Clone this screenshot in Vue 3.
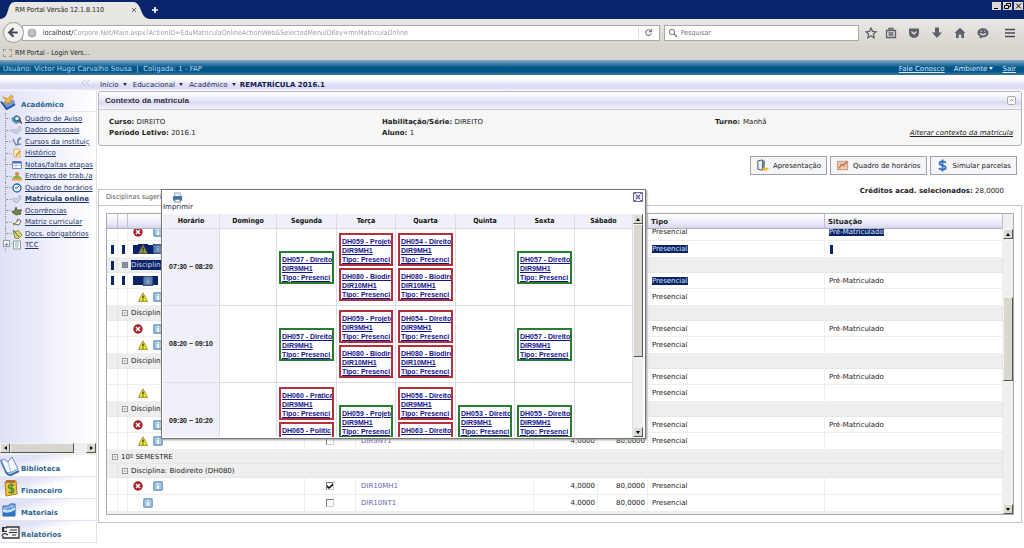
<script setup>
const toolIcons = [
  { name: 'Favoritos', line: 'M6 1l1.500 3.300 3.500.4-2.600 2.400.7 3.600L6 8.900 2.900 10.700l.7-3.600L1 4.700l3.500-.4z' },
  { name: 'Lista', line: 'M1.500 3.500h9v7h-9zM4 3.500v-2h4v2M3.500 6h5M3.500 8h5' },
  { name: 'Pocket', d: 'M1 1.500h10v4q0 5-5 5.500-5-.5-5-5.500z', over: 'M3.500 4.500L6 7l2.500-2.500' },
  { name: 'Downloads', d: 'M4 .5h4v5h3L6 11 1 5.500h3z' },
  { name: 'Início', d: 'M6 .7L11.500 6H10v5H7.300V7.500H4.700V11H2V6H.5z' },
  { name: 'Conversa', d: 'M6 1.200C9 1.200 11.500 3 11.500 5.800S9 10.300 6 10.300L2.500 11.500 2.800 9.400C1.300 8.600.5 7.400.5 5.800.5 3 3 1.200 6 1.200z', over: 'M3 6.300q3 3 6 0M3.700 4.200h1M7.300 4.200h1' },
]

const menu = [
  { t: 'Quadro de Aviso', k: 'board' },
  { t: 'Dados pessoais', k: 'tag' },
  { t: 'Cursos da instituiç', k: 'pen' },
  { t: 'Histórico', k: 'doc' },
  { t: 'Notas/faltas etapas', k: 'table' },
  { t: 'Entregas de trab./a', k: 'person' },
  { t: 'Quadro de horários', k: 'clock' },
  { t: 'Matrícula online', k: 'tag', bold: true },
  { t: 'Ocorrências', k: 'hand' },
  { t: 'Matriz curricular', k: 'link' },
  { t: 'Docs. obrigatórios', k: 'leaf' },
  { t: 'TCC', k: 'page', plus: true },
]

const sections = [
  { t: 'Biblioteca', k: 'book' },
  { t: 'Financeiro', k: 'money' },
  { t: 'Materiais', k: 'folder' },
  { t: 'Relatórios', k: 'report' },
]

const P = 'Presencial'
const M = 'Pré-Matriculado'
const rows = [
  { h: 'tall', ic: ['x', 'gap', 'info'], tipo: P, sit: M, selSit: true },
  { h: 'tall', ic: ['half', 'warn', 'half', 'info'], tipo: P, selTipo: true, selIcons: true, bar: true },
  { g: 2, t: 'Disciplina', sel: true },
  { h: 'short', ic: ['gap', 'info', 'half'], tipo: P, sit: M, selTipo: true, selIcons: true },
  { h: 'tall', ic: ['half', 'warn', 'half', 'info'], tipo: P },
  { g: 2, t: 'Disciplina' },
  { h: 'short', ic: ['x', 'gap', 'info'], tipo: P, sit: M },
  { h: 'tall', ic: ['half', 'warn', 'half', 'info'], tipo: P },
  { g: 2, t: 'Disciplina' },
  { h: 'short', ic: [], tipo: P, sit: M },
  { h: 'tall', ic: ['half', 'warn'], tipo: P },
  { g: 2, t: 'Disciplina' },
  { h: 'short', ic: ['x', 'gap', 'info'], tipo: P, sit: M },
  { h: 'tall', ic: ['half', 'warn', 'half', 'info'], turma: 'DIR9NT1', tipo: P },
  { g: 1, t: '10º SEMESTRE' },
  { g: 2, t: 'Disciplina: Biodireito (DH080)', low: true },
  { h: 'tall', ic: ['x', 'gap', 'info'], turma: 'DIR10MH1', on: true, tipo: P },
  { h: 'tall', ic: ['gap', 'info'], turma: 'DIR10NT1', tipo: P },
]

const days = ['Horário', 'Domingo', 'Segunda', 'Terça', 'Quarta', 'Quinta', 'Sexta', 'Sábado']
const c = (code, cls, color) => ({ code, cls, color })
const a = c('DH059 - Projeto', 'DIR9MH1', 'red')
const b = c('DH080 - Biodire', 'DIR10MH1', 'red')
const e = c('DH054 - Direito', 'DIR9MH1', 'red')
const f = c('DH057 - Direito', 'DIR9MH1', 'green')
const slots = [
  { time: '07:30 ~ 08:20', d: [[], [f], [a, b], [e, b], [], [f], []] },
  { time: '08:20 ~ 09:10', d: [[], [f], [a, b], [e, b], [], [f], []] },
  {
    time: '09:30 ~ 10:20',
    d: [
      [],
      [c('DH060 - Prática', 'DIR9MH1', 'red'), c('DH065 - Polític', 'DIR9MH1', 'red')],
      [c('DH059 - Projeto', 'DIR9MH1', 'green')],
      [c('DH056 - Direito', 'DIR9MH1', 'red'), c('DH063 - Direito', 'DIR9MH1', 'red')],
      [c('DH053 - Direito', 'DIR9MH1', 'green')],
      [c('DH055 - Direito', 'DIR9MH1', 'green')],
      [],
    ],
  },
]
</script>

<template>
  <div class="page">
    <div class="titlebar">
      <div class="tab">
        <svg class="tabshape" viewBox="0 0 154 18" preserveAspectRatio="none"><path d="M0 18Q6 18 8 10Q10 1 15 1H137Q142 1 145 10Q148 18 154 18z" fill="#e9e7e3" /></svg>
        <span class="tabtext">RM Portal Versão 12.1.8.110</span>
        <button class="tabclose" aria-label="Fechar aba"><svg viewBox="0 0 6 6"><path d="M1 1l4 4M5 1L1 5" stroke="#666" /></svg></button>
      </div>
      <button class="newtab" aria-label="Nova aba"><svg viewBox="0 0 8 8"><path d="M4 1v6M1 4h6" stroke="#fff" stroke-width="1.600" /></svg></button>
      <div class="wins">
        <button aria-label="Minimizar"><svg viewBox="0 0 9 8"><path d="M2 6.500h4" stroke="#000" /></svg></button>
        <button aria-label="Restaurar"><svg viewBox="0 0 9 8"><path d="M3.500 3V1.500h4v3H6M1.500 3.500h4v3h-4z" stroke="#000" fill="none" /></svg></button>
        <button aria-label="Fechar"><svg viewBox="0 0 9 8"><path d="M2 1.500l5 5M7 1.500l-5 5" stroke="#000" /></svg></button>
      </div>
    </div>

    <div class="navbar">
      <button class="back" aria-label="Voltar"><svg viewBox="0 0 20 20"><path d="M15 10H6M10 5L5 10l5 5" fill="none" stroke="#444b55" stroke-width="2.500" /></svg></button>
      <div class="field url">
        <svg class="globe" viewBox="0 0 10 10"><circle cx="5" cy="5" r="4" fill="#ddd" stroke="#aaa" /><path d="M1 4h8M1.500 7h7M5 1v8M3 1.500q-1 3.500 0 7M7 1.500q1 3.500 0 7" stroke="#999" stroke-width=".6" fill="none" /></svg>
        <input aria-label="Endereço" value="localhost/Corpore.Net/Main.aspx?ActionID=EduMatriculaOnlineActionWeb&SelectedMenuIDKey=mnMatriculaOnline" />
        <button class="reload" aria-label="Recarregar"><svg viewBox="0 0 10 10"><path d="M7.500 3A3.200 3.200 0 1 0 8.200 6M8.500 1v3H5.500" fill="none" stroke="#777" stroke-width="1.200" /></svg></button>
      </div>
      <div class="field search">
        <svg class="lens" viewBox="0 0 10 10"><circle cx="4" cy="4" r="2.700" fill="none" stroke="#777" /><path d="M6 6l3 3" stroke="#777" stroke-width="1.300" /></svg>
        <input aria-label="Pesquisar" placeholder="Pesquisar" />
      </div>
      <div class="tools">
        <button v-for="i in toolIcons" :key="i.name" :aria-label="i.name">
          <svg viewBox="0 0 12 12">
            <path v-if="i.d" :d="i.d" fill="#5c626b" />
            <path v-if="i.line" :d="i.line" fill="none" stroke="#5c626b" stroke-width="1.300" />
            <path v-if="i.over" :d="i.over" fill="none" stroke="#e4e2de" stroke-width="1.300" />
          </svg>
        </button>
      </div>
      <button class="burger" aria-label="Menu"><svg viewBox="0 0 12 12"><path d="M1 2.500h10M1 6h10M1 9.500h10" stroke="#444b55" stroke-width="1.600" /></svg></button>
    </div>
    <div class="bookmarks"><i></i><a href="#">RM Portal - Login Vers...</a></div>

    <header class="user">
      <span>Usuário: Victor Hugo Carvalho Sousa &nbsp;|&nbsp; Coligada: 1 - FAP</span>
      <nav><a href="#">Fale Conosco</a><button>Ambiente <i class="caret"></i></button><a href="#">Sair</a></nav>
    </header>

    <div class="crumbs">
      <span class="chev"><svg viewBox="0 0 10 8"><path d="M4 1L1 4l3 3M8 1L5 4l3 3" fill="none" stroke="#c4c4dc" /></svg></span>
      <nav><a href="#">Início <i class="caret"></i></a><a href="#">Educacional <i class="caret"></i></a><a href="#">Acadêmico <i class="caret"></i></a><b>REMATRÍCULA 2016.1</b></nav>
    </div>

    <div class="body">
      <aside>
        <h2>
          <svg viewBox="0 0 18 18"><path d="M2 10l4-3 9-1 1 5-9 6z" fill="#6d9be0" /><path d="M1 8l6 8 9-5" fill="none" stroke="#2456a4" stroke-width="2" /><path d="M3 3l5 2 4-4 2 2-3 4 2 3-4-1-4 2 1-4z" fill="#f3b63e" stroke="#b57a1a" stroke-width=".6" /></svg>
          Acadêmico
        </h2>
        <ul class="tree">
          <li v-for="m in menu" :key="m.t">
            <span class="twig"><i v-if="m.plus">+</i></span>
            <svg viewBox="0 0 10 10">
              <g v-if="m.k === 'board'"><path d="M0 4l4-3 5 3v4l-5 2-4-3z" fill="#4c94bd" /><circle cx="5" cy="4.500" r="2.400" fill="#d9eff9" stroke="#27506e" /><path d="M7 6l3 3.500" stroke="#7a3b1c" stroke-width="1.600" /></g>
              <g v-else-if="m.k === 'tag'"><path d="M1 4l4 1 3-4 1 4-4 4-4-2z" fill="#c9d4e6" stroke="#9aaac4" stroke-width=".6" /></g>
              <g v-else-if="m.k === 'pen'"><path d="M1 2l3 6 5-1" fill="none" stroke="#7a88a4" stroke-width="1.500" /><path d="M9 1Q5 2 6 7" fill="none" stroke="#4b6fb0" stroke-width="1.300" /></g>
              <g v-else-if="m.k === 'doc'"><path d="M2 1h5l1 2v6H2z" fill="#fff3c9" stroke="#c9a050" stroke-width=".8" /><path d="M8 3L4 8" stroke="#e08a20" stroke-width="1.400" /></g>
              <g v-else-if="m.k === 'table'"><path d="M.5 1.500h9v7h-9z" fill="#fff" stroke="#6c8fce" /><path d="M1 2.500h8" stroke="#3f6cc0" stroke-width="2" /><path d="M1 5.500h8M4 3v5" stroke="#9ab1dc" stroke-width=".7" /></g>
              <g v-else-if="m.k === 'person'"><circle cx="5" cy="3" r="2" fill="#d98a3c" /><path d="M1 9V6q4-3 8 0v3z" fill="#7bb054" /><path d="M0 7h10v2.500H0z" fill="#e2a13f" /></g>
              <g v-else-if="m.k === 'clock'"><circle cx="5" cy="5" r="4" fill="#eaf6ff" stroke="#2b6fb5" stroke-width="1.400" /><path d="M5 5l2-2M5 5H3" stroke="#333" stroke-width=".9" /></g>
              <g v-else-if="m.k === 'hand'"><path d="M0 6l3-2 1-3 1 3h5L8 6l1 2-5 1z" fill="#6c8b4a" stroke="#3f3a2c" stroke-width=".7" /></g>
              <g v-else-if="m.k === 'link'"><path d="M1 7l3-1 2-4 3 2-2 4z" fill="#fff" stroke="#5d6a88" /><path d="M1 9l6-6" stroke="#d8a436" /></g>
              <g v-else-if="m.k === 'leaf'"><path d="M1 1l3 2 2-2 4 5-4 4-3-1z" fill="#e6d36a" stroke="#6b7d43" stroke-width=".8" /><path d="M2 2l5 6" stroke="#496a39" /></g>
              <g v-else><path d="M1.500 1h7v8h-7z" fill="#fff" stroke="#8899a8" /><path d="M3 3h4M3 5h4M3 7h3" stroke="#6da085" stroke-width=".8" /></g>
            </svg>
            <a href="#" :class="{ bold: m.bold }">{{ m.t }}</a>
          </li>
        </ul>
        <div class="hscroll"><button aria-label="Rolar à esquerda"><i class="tri left"></i></button><span></span><button aria-label="Rolar à direita"><i class="tri right"></i></button></div>
        <div class="sections">
          <a v-for="s in sections" :key="s.t" href="#">
            <svg viewBox="0 0 20 20">
              <g v-if="s.k === 'book'"><path d="M1 4l5 12q1 3 5 3l8-4" fill="none" stroke="#3d6cae" stroke-width="2" /><path d="M1 4q4-2 7 2l4-5 6 12-8 4q-3 0-4-2z" fill="#f4f9ff" stroke="#5d88c4" /><path d="M8 6l3 10" stroke="#9ebbe0" /></g>
              <g v-else-if="s.k === 'money'"><path d="M5 4l11-1 1 13-11 2z" fill="#f5c437" stroke="#b27822" /><path d="M6 2h9v3H6z" fill="#b86f35" /><path d="M14 7.500q-5-2-5.500.7 0 2 2.500 2.300 3 .3 2.800 2.200 0 3-5.500 1.300M11.500 5.500v10.500" fill="none" stroke="#3f9137" stroke-width="1.600" /></g>
              <g v-else-if="s.k === 'folder'"><path d="M3 6h6l1-2h5v12H3z" fill="#8fbcee" stroke="#2f67ac" /><path d="M3 10l12-3v9H3z" fill="#2c72c8" /><path d="M3 9q6 2 12-2v3q-6 4-12 2z" fill="#c4e0fb" /></g>
              <g v-else><path d="M6 5h13v11H3v-2" fill="#f4f4f4" stroke="#333" stroke-width="1.300" /><path d="M2 5h5v5H2z" fill="#333" /><circle cx="5.500" cy="7.500" r="1.500" fill="#fff" /><path d="M2 14q1-4 6-1M10 8h7M9 10.500h8M12 13h4" stroke="#333" stroke-width="1.200" fill="none" /></g>
            </svg>
            <span>{{ s.t }}</span>
          </a>
        </div>
      </aside>

      <main>
        <section class="context">
          <h3>Contexto da matrícula <button aria-label="Recolher"><svg viewBox="0 0 8 8"><path d="M2 5l2-2 2 2" fill="none" stroke="#778" /></svg></button></h3>
          <div class="fields">
            <p><b>Curso:</b> DIREITO<br /><b>Período Letivo:</b> 2016.1</p>
            <p><b>Habilitação/Série:</b> DIREITO<br /><b>Aluno:</b> 1</p>
            <p><b>Turno:</b> Manhã<a href="#">Alterar contexto da matrícula</a></p>
          </div>
        </section>

        <div class="actions">
          <button><svg viewBox="0 0 14 14"><path d="M2 2l5-1v11l-5-1z" fill="#e8eef6" stroke="#455" /><path d="M7 2h2v7H7" fill="#6b86b8" stroke="#455" stroke-width=".6" /><path d="M6 12l3-3 5 1-3 3z" fill="#f1b93a" /></svg>Apresentação</button>
          <button><svg viewBox="0 0 14 14"><path d="M1.500 2.500h11v9h-11z" fill="#f5d2b9" stroke="#b98e7a" /><path d="M2 5h10M2 8h10M5 3v8M9 3v8" stroke="#e0b09a" stroke-width=".8" /><path d="M3 10l3-4 2 1 4-4" fill="none" stroke="#c9683c" stroke-width="1.300" /></svg>Quadro de horários</button>
          <button><svg viewBox="0 0 14 14"><path d="M10.500 4Q9.500 2.500 7 2.500 3.800 2.500 3.800 4.700 3.800 6.500 7 7q3.500.5 3.500 2.500Q10.500 11.500 7 11.500 4 11.500 3.200 9.800M7 .5v13" fill="none" stroke="#2d6fc0" stroke-width="1.900" /></svg>Simular parcelas</button>
        </div>

        <div class="tabrow">
          <div class="subtab">Disciplinas sugeridas</div>
          <p><b>Créditos acad. selecionados:</b> 28,0000</p>
        </div>

        <section class="panel">
          <div class="grid">
            <div class="gridhead"><span></span><span></span><span></span><span>Tipo</span><span>Situação</span></div>
            <div class="gridbody">
              <div class="clip">
                <table>
                  <colgroup><col class="c1" /><col class="c2" /><col class="c3" /><col class="c4" /><col class="c5" /><col class="c6" /><col class="c7" /><col class="c8" /><col /></colgroup>
                  <tbody>
                    <tr v-for="(r, n) in rows" :key="n" :class="r.g ? ['group', { low: r.g === 1 || r.low }] : r.h">
                      <template v-if="r.g">
                        <td v-if="r.g === 2"><i v-if="r.sel" class="selbar"></i></td>
                        <td :colspan="r.g === 2 ? 8 : 9">
                          <div class="gl" :class="{ sel: r.sel }"><svg viewBox="0 0 7 7"><path d="M.5.5h6v6h-6zM2 3.500h3" fill="none" stroke="#777" /></svg><span>{{ r.t }}</span></div>
                        </td>
                      </template>
                      <template v-else>
                        <td><i v-if="r.selIcons" class="selbar"></i></td>
                        <td><i v-if="r.selIcons" class="selbar"></i></td>
                        <td>
                          <div class="icons" :class="{ sel: r.selIcons }">
                            <template v-for="(k, j) in r.ic" :key="j">
                              <i v-if="k === 'gap' || k === 'half'" :class="k"></i>
                              <svg v-else viewBox="0 0 10 10">
                                <g v-if="k === 'x'"><circle cx="5" cy="5" r="4.700" fill="#a8202a" /><path d="M3 3l4 4M7 3L3 7" stroke="#fff" stroke-width="1.600" /></g>
                                <g v-else-if="k === 'warn'"><path d="M5 .8L9.600 9.400H.4z" fill="#f7e427" stroke="#8f8420" stroke-width=".8" /><path d="M5 3.500v3M5 7.500v1" stroke="#222" stroke-width="1.200" /></g>
                                <g v-else><rect x=".8" y=".8" width="8.400" height="8.400" rx="1" fill="#a9cae6" stroke="#6790b6" stroke-width="1.200" /><path d="M5 4v4M5 2v1" stroke="#fff" stroke-width="1.600" /></g>
                              </svg>
                            </template>
                          </div>
                        </td>
                        <td class="mid"><input v-if="r.turma" type="checkbox" :checked="r.on" :aria-label="r.turma" /></td>
                        <td class="turma">{{ r.turma }}</td>
                        <td class="num">{{ r.turma ? '4,0000' : '' }}</td>
                        <td class="num">{{ r.turma ? '80,0000' : '' }}</td>
                        <td class="txt"><mark v-if="r.selTipo">{{ r.tipo }}</mark><template v-else>{{ r.tipo }}</template></td>
                        <td class="txt"><mark v-if="r.selSit">{{ r.sit }}</mark><i v-else-if="r.bar" class="selbar"></i><template v-else>{{ r.sit }}</template></td>
                      </template>
                    </tr>
                  </tbody>
                </table>
              </div>
              <div class="vscroll grids"><button aria-label="Rolar para cima"><i class="tri up"></i></button><span class="thumb"></span><button aria-label="Rolar para baixo"><i class="tri down"></i></button></div>
            </div>
          </div>
        </section>

        <div class="dialog" role="dialog" aria-label="Quadro de horários">
          <div class="dlgbar">
            <button class="print"><svg viewBox="0 0 12 12"><path d="M3 1h6v4H3z" fill="#e8f2fb" stroke="#6f8fb0" stroke-width=".8" /><path d="M1 4.500h10v5H1z" fill="#3f74a8" /><path d="M3 8h6v3H3z" fill="#fff" stroke="#567" stroke-width=".8" /></svg>Imprimir</button>
            <button class="close" aria-label="Fechar quadro"><svg viewBox="0 0 10 10"><path d="M.5.500h9v9h-9z" fill="#eef" stroke="#6a6e94" /><path d="M3 3l4 4M7 3L3 7" stroke="#6a6e94" stroke-width="1.400" /><path d="M1 1h2M7 1h2M1 9h2M7 9h2" stroke="#6a6e94" stroke-width="2" /></svg></button>
          </div>
          <div class="dlgbody">
            <div class="tt">
              <table>
                <thead><tr><th v-for="(d, n) in days" :key="d" :class="'d' + n">{{ d }}</th></tr></thead>
                <tbody>
                  <tr v-for="s in slots" :key="s.time">
                    <th>{{ s.time }}</th>
                    <td v-for="(d, n) in s.d" :key="n">
                      <div v-if="d.length" class="stack">
                        <a v-for="k in d" :key="k.code" href="#" :class="['card', k.color]">{{ k.code }}<br />{{ k.cls }}<br />Tipo: Presenci</a>
                      </div>
                    </td>
                  </tr>
                </tbody>
              </table>
            </div>
            <div class="vscroll dlgs"><button aria-label="Rolar para cima"><i class="tri up"></i></button><span class="thumb"></span><button aria-label="Rolar para baixo"><i class="tri down"></i></button></div>
          </div>
        </div>
      </main>
    </div>
  </div>
</template>

<style>
body { background: #fff; }
</style>

<style scoped>
* { box-sizing: border-box; }
.page { font: 7px/10px "DejaVu Sans", sans-serif; color: #222; min-height: 100vh; display: flex; flex-direction: column; overflow: hidden; }
button { font: inherit; color: inherit; border: 0; padding: 0; margin: 0; background: none; display: flex; align-items: center; justify-content: center; }
svg { display: block; flex: none; }
a { color: inherit; }
p, h2, h3, ul { margin: 0; padding: 0; }
input { font: inherit; margin: 0; }

.titlebar { height: 19px; background: #08246b; display: flex; align-items: flex-end; }
.tab { position: relative; width: 150px; height: 18px; display: flex; align-items: center; padding-left: 15px; font: 7px/12px "DejaVu Sans Condensed", "DejaVu Sans", sans-serif; }
.tabshape { position: absolute; inset: 0; width: 100%; height: 100%; }
.tabtext { position: relative; white-space: nowrap; }
.tabclose { position: relative; margin-left: auto; margin-right: 13px; }
.tabclose svg { width: 6px; height: 6px; }
.newtab { height: 18px; width: 10px; }
.newtab svg { width: 8px; height: 8px; }
.wins { margin-left: auto; align-self: flex-start; display: flex; gap: 2px; padding: 2px 1px 0 0; }
.wins button { width: 9px; height: 8px; background: #dedad2; }
.wins svg { width: 9px; height: 8px; }

.navbar { height: 27px; display: flex; align-items: center; background: linear-gradient(#eae8e5, #d8d5cf); padding: 0 8px 0 3px; font: 7px/12px "DejaVu Sans Condensed", "DejaVu Sans", sans-serif; }
.back { width: 21px; height: 21px; border: 1px solid #999; border-radius: 50%; background: #f3f2f0; z-index: 1; }
.back svg { width: 17px; height: 17px; }
.field { display: flex; align-items: center; height: 16px; background: #fff; border: 1px solid #aaa8a4; }
.field input { border: 0; outline: 0; padding: 0; background: none; flex: 1; min-width: 0; height: 12px; }
.field input::placeholder { color: #777; opacity: 1; }
.url { flex: 641; margin-left: -2px; padding-left: 4px; }
.url input { margin-left: 6px; color: transparent; background: linear-gradient(90deg, #222 31px, #999 31px); -webkit-background-clip: text; background-clip: text; }
.globe, .lens { width: 10px; height: 10px; }
.reload { width: 21px; height: 12px; border-left: 1px solid #ddd; }
.reload svg { width: 9px; height: 9px; }
.search { flex: 193; margin-left: 4px; padding-left: 3px; }
.search input { margin-left: 3px; }
.tools { display: flex; gap: 11px; margin-left: 6px; }
.tools svg, .burger svg { width: 12px; height: 12px; }
.tools button:first-child { margin-right: -3px; }
.burger { margin-left: 15px; }
.bookmarks { height: 14px; display: flex; align-items: center; gap: 3px; padding-left: 3px; background: #d7d4ce; font: 7px/12px "DejaVu Sans Condensed", "DejaVu Sans", sans-serif; }
.bookmarks a { text-decoration: none; }
.bookmarks i { width: 9px; height: 8px; border: 1px dashed #999; }

.user { height: 15px; display: flex; align-items: center; justify-content: space-between; padding: 2px 8px 0 3px; color: #b9dcf4; background: linear-gradient(#82aac8, #00558a 50%, #00558a 75%, #43779a); white-space: nowrap; }
.user nav { display: flex; gap: 9px; color: #d8ebf8; }
.caret { display: inline-block; border: 2px solid transparent; border-top: 3px solid; border-bottom: 0; vertical-align: 1px; margin-left: 2px; }

.crumbs { height: 16px; display: flex; align-items: center; background: linear-gradient(#fff 25%, #dcdcf3 65%, #dedef4 85%, #fff); color: #20305c; }
.chev { width: 97px; display: flex; justify-content: flex-end; padding-right: 6px; }
.chev svg { width: 10px; height: 8px; }
.crumbs nav { display: flex; gap: 6px; padding: 3px 0 0 3px; }
.crumbs a { text-decoration: none; }
.crumbs b { color: #102050; margin-left: -2px; }

.body { flex: 1; display: flex; align-items: flex-start; }
aside { width: 97px; flex: none; overflow: hidden; background: linear-gradient(90deg, #dfe0f6, #fff); border-right: 1px solid #e2e2ea; }
aside h2 { height: 21px; display: flex; align-items: flex-end; gap: 4px; font: bold 7px/12px "DejaVu Sans", sans-serif; color: #2c6490; border-bottom: 1px solid #e4e6f2; }
aside h2 svg { width: 17px; height: 17px; }
.tree { list-style: none; height: 331px; display: grid; align-content: start; grid-template-rows: repeat(12, calc(138px / 12)); padding: 1px 0 0 5px; }
.tree li { display: flex; align-items: center; white-space: nowrap; border-left: 1px dotted #999; color: #1c3668; }
.tree svg { width: 10px; height: 10px; margin-right: 3px; }
.twig { width: 6px; border-top: 1px dotted #999; display: flex; }
.twig i { font: 6px/6px "DejaVu Sans", sans-serif; border: 1px solid #999; background: #fff; height: 7px; margin: -4px 0 0 -3px; }
.bold { font-weight: bold; }
.hscroll { display: flex; align-items: stretch; height: 12px; background: #eee; }
.hscroll button, .vscroll button { width: 10px; height: 10px; background: #dcd9d2; border: 1px solid #f4f3f0; border-right-color: #555; border-bottom-color: #555; flex: none; }
.hscroll span { width: 64px; height: 10px; margin-right: auto; background: #d8d5ce; border: 1px solid #f4f3f0; border-right-color: #555; border-bottom-color: #555; }
.tri { border: 2px solid transparent; }
.left { border-right: 3px solid #000; border-left: 0; }
.right { border-left: 3px solid #000; border-right: 0; }
.up { border-bottom: 3px solid #000; border-top: 0; }
.down { border-top: 3px solid #000; border-bottom: 0; }
.sections a { height: 22px; display: flex; align-items: flex-end; gap: 1px; font-weight: bold; color: #2c6490; text-decoration: none; border-bottom: 1px solid #e2e4f2; background: linear-gradient(165deg, #e2e2f7 25%, #fff 50%); }
.sections svg { width: 20px; height: 20px; }
.sections span { line-height: 13px; }

main { flex: 1; min-width: 0; position: relative; padding: 0 2px 0 1px; }
.context { border: 1px solid #b4b4ba; border-radius: 3px; background: #f6f6f6; }
.context h3 { height: 18px; display: flex; align-items: center; justify-content: space-between; padding: 0 5px 0 6px; font: bold 8px/12px "Liberation Sans", Arial, sans-serif; color: #334; background: linear-gradient(#fdfdff, #e6e6f8 50%, #d8d8f2 60%, #f4f4fc); border-bottom: 1px solid #c8c8d0; border-radius: 3px 3px 0 0; }
.context h3 button { width: 9px; height: 9px; border: 1px solid #aaa; border-radius: 2px; background: #fff; }
.context h3 svg { width: 7px; height: 7px; }
.fields { display: grid; grid-template-columns: 273px 333px 1fr; padding: 7px 8px 6px 10px; line-height: 11px; }
.fields p:last-child { display: flex; flex-wrap: wrap; gap: 0 3px; }
.fields a { flex-basis: 100%; text-align: right; font-style: italic; }
.actions { display: flex; justify-content: flex-end; gap: 3px; padding: 10px 5px 0 0; }
.actions button { height: 19px; border: 1px solid #a0a0a8; background: #f5f5f8; padding: 0 5px; gap: 4px; }
.actions svg { width: 13px; height: 13px; }
.tabrow { height: 21px; margin-top: 9px; display: flex; justify-content: space-between; align-items: flex-start; }
.subtab { align-self: flex-end; height: 16px; width: 100px; padding: 0 7px; border: 1px solid #c4c4c8; border-bottom: 0; font: 7px/15px "DejaVu Sans Condensed", "DejaVu Sans", sans-serif; color: #555; white-space: nowrap; }
.tabrow p { padding: 2px 18px 0 0; }
.panel { border: 1px solid #c4c4c8; padding: 7px; }
.grid { border: 1px solid #a8a8ae; background: #f0f0f0; }
.gridhead { display: grid; grid-template-columns: 11px 10px 520px 177px 1fr; height: 15px; margin-right: 10px; background: linear-gradient(#fff, #e8e8f8 70%, #d4d4ee); border-bottom: 1px solid #b0b0c0; font-weight: bold; line-height: 16px; }
.gridhead span { border-right: 1px solid #c0c0cc; padding-left: 3px; }
.gridbody { display: flex; }
.clip { flex: 1; min-width: 0; overflow: hidden; padding-bottom: 2px; }
.clip table { border-collapse: separate; border-spacing: 0; table-layout: fixed; width: 100%; margin-top: -5px; background: #fff; }
.clip td { padding: 0; border-bottom: 1px solid #eee; border-right: 1px solid #f0f0f0; overflow: hidden; white-space: nowrap; }
.c1 { width: 11px; } .c2 { width: 10px; } .c3 { width: 177px; } .c4 { width: 51px; } .c5 { width: 178px; } .c6 { width: 64px; } .c7 { width: 50px; } .c8 { width: 177px; }
.tall { height: 17px; } .short { height: 16px; } .group { height: 15px; } .low { height: 14px; }
.group td { background: #eee; border-color: #e6e6e6; }
.gl { display: flex; align-items: center; gap: 3px; padding-left: 4px; }
.group td:first-child .gl { padding-left: 5px; }
.gl svg { width: 6px; height: 6px; background: #fff; }
.gl.sel span { background: #0a246a; color: #dde; }
.gl.sel svg { background: #8797c4; }
.icons { display: flex; align-items: center; height: 10px; padding-left: 5px; }
.icons svg { width: 10px; height: 10px; }
.gap { width: 10px; height: 9px; } .half { width: 5px; height: 9px; }
.icons.sel .gap, .icons.sel .half { background: #0a246a; }
.icons.sel svg { background: #0a246a; }
.icons.sel g { opacity: .6; }
.selbar { display: block; width: 3px; height: 9px; margin-left: 4px; background: #0a246a; }
.mid input { display: block; appearance: none; width: 8px; height: 8px; margin: 0 auto; border: 1px solid #777; border-right-color: #ccc; border-bottom-color: #ccc; background: #fff; }
.mid input:checked::before { content: ""; display: block; width: 6px; height: 6px; background: #111; clip-path: polygon(0 35%, 35% 65%, 100% 0, 100% 40%, 35% 100%, 0 70%); }
.clip .turma { padding-left: 5px; color: #6468b4; }
.clip .num { text-align: right; padding-right: 2px; }
.clip .txt { padding-left: 4px; }
.txt .selbar { margin-left: 1px; }
mark { background: #0a246a; color: #dde4f8; }

.vscroll { width: 10px; flex: none; display: flex; flex-direction: column; background: #efefef; }
.thumb { background: #dad7d1; border: 1px solid #f4f3f0; border-right-color: #555; border-bottom-color: #555; }
.grids .thumb { margin: 58px 0 auto; height: 84px; }
.dlgs .thumb { height: 133px; margin-bottom: auto; }

.dialog { position: absolute; left: 64px; top: 98px; width: 485px; background: #fff; border: 1px solid #777; box-shadow: 1px 1px 2px #999; font-family: "DejaVu Sans Condensed", "DejaVu Sans", sans-serif; padding: 0 2px 1px 1px; }
.dlgbar { height: 24px; display: flex; align-items: flex-start; justify-content: space-between; padding: 2px 0 0 0; }
.print { flex-direction: column; color: #224; line-height: 9px; font-family: "DejaVu Sans", sans-serif; }
.print svg { width: 11px; height: 11px; }
.close svg { width: 10px; height: 10px; }
.dlgbody { display: flex; height: 223px; }
.tt { flex: 1; overflow: hidden; }
.tt table { width: 100%; table-layout: fixed; border-collapse: separate; border-spacing: 0; }
.tt th, .tt td { padding: 0; border-right: 1px solid #dcdce6; border-bottom: 1px solid #dcdce6; }
.tt th { background: #f0f0f8; color: #111; }
.tt thead th { height: 15px; }
.tt tbody tr { height: 77px; }
.tt tbody th { font-family: "Liberation Sans", Arial, sans-serif; }
.d0, .d1 { width: 57px; } .d2, .d3, .d4, .d5, .d6 { width: 60px; }
.d3, .d5 { width: 59px; }
.stack { display: flex; flex-direction: column; gap: 2px; padding: 0 2px; }
.card { display: block; height: 33px; border: 2px solid; padding: 2px 0 0 1px; font: bold 7px/9px "Liberation Sans", Arial, sans-serif; white-space: nowrap; overflow: hidden; color: #14148c; }
.red { border-color: #b4303c; }
.green { border-color: #2a7c30; }
</style>
